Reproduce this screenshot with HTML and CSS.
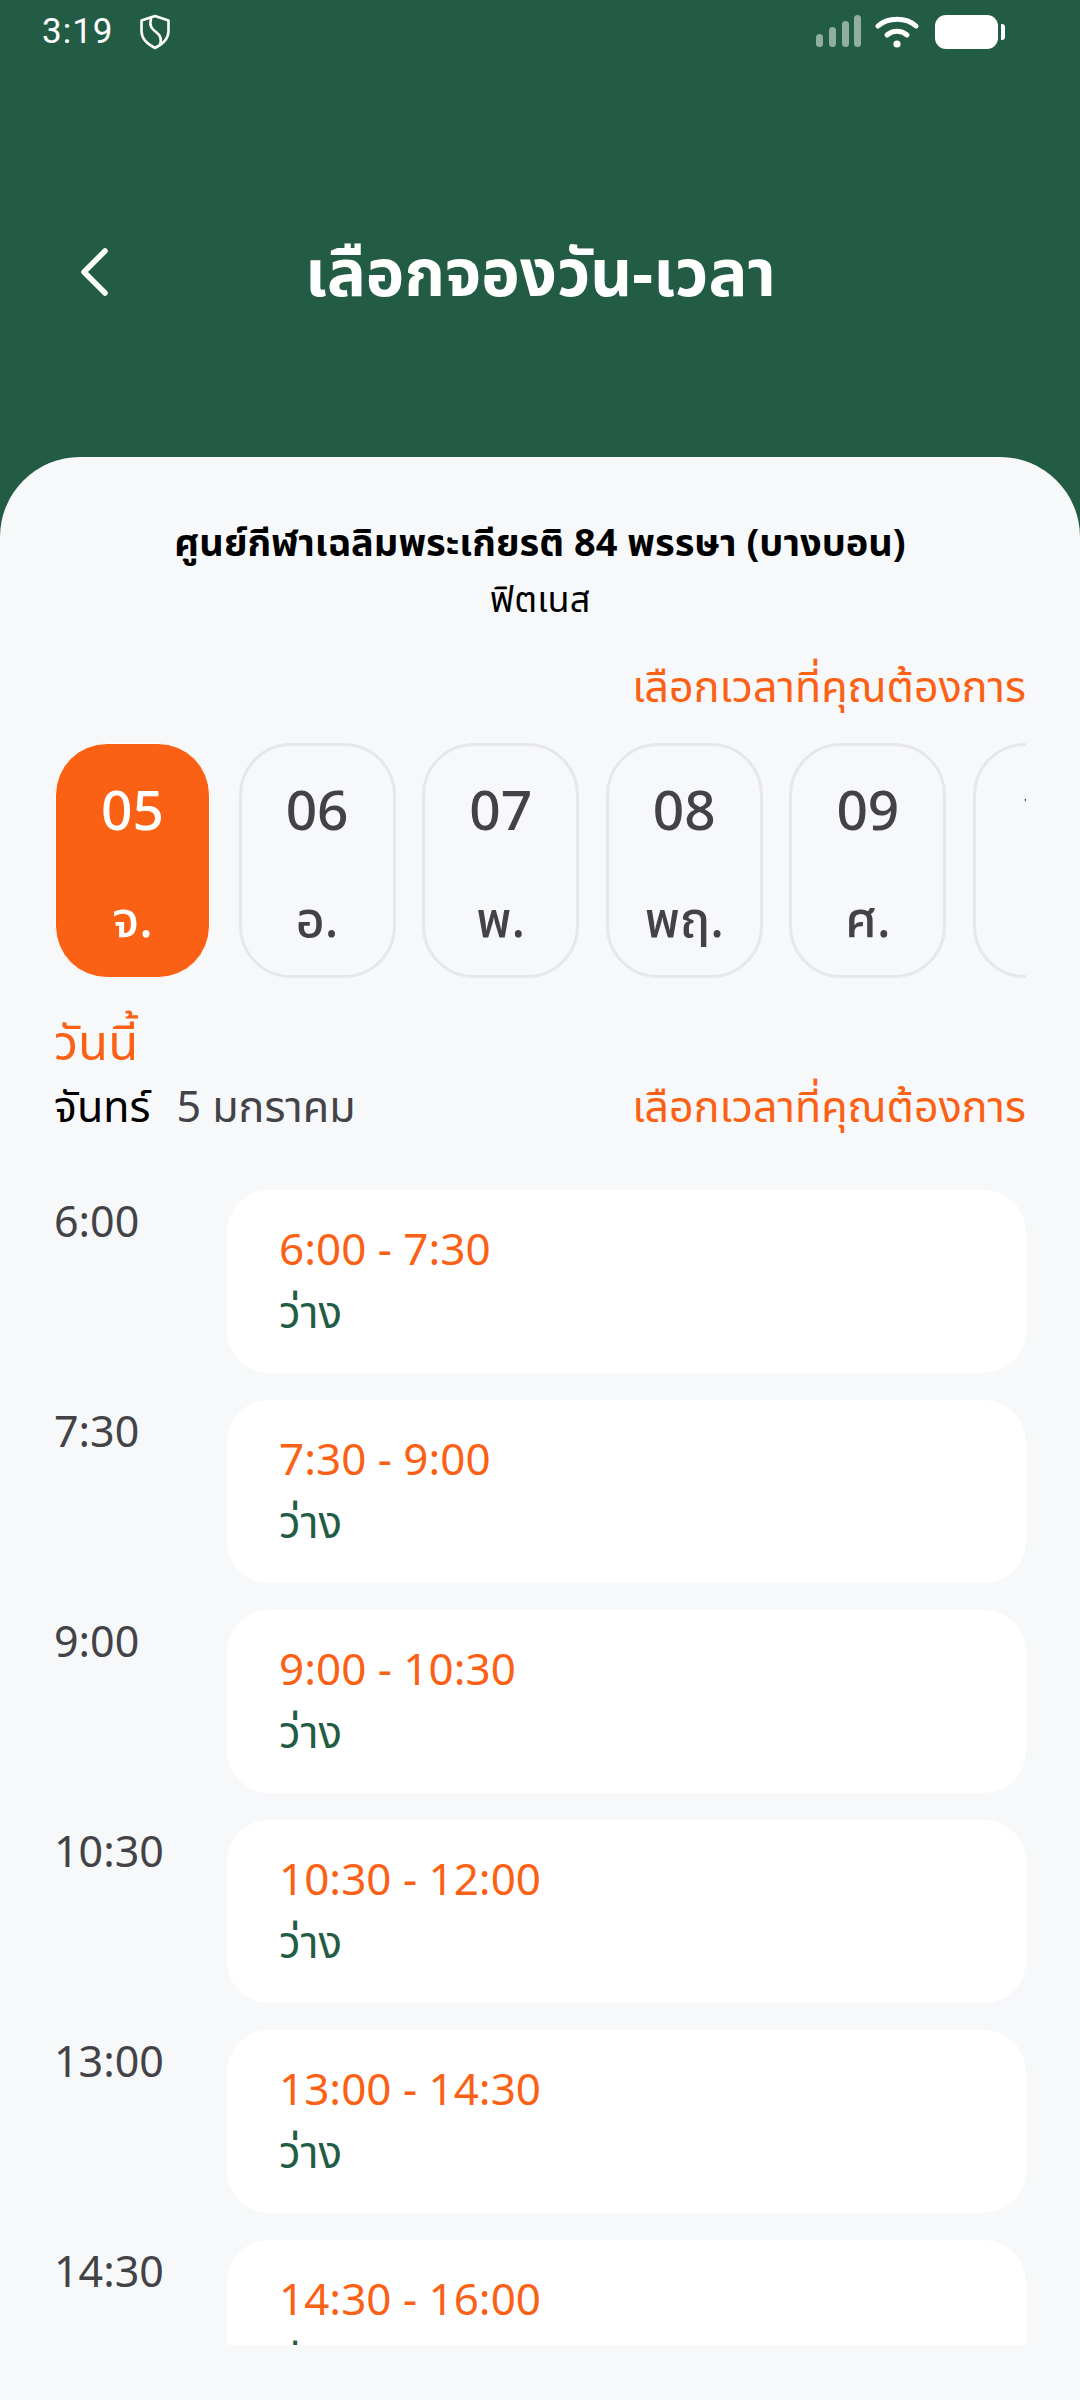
FILE: index.html
```html
<!DOCTYPE html>
<html lang="th">
<head>
  <meta charset="UTF-8">
  <title>เลือกจองวัน-เวลา</title>
  <link rel="stylesheet" href="styles.css">
</head>
<body>
  <header class="header">
    <div class="status-bar">
      <div class="status-left">
        <span class="clock">3:19</span>
        <svg class="shield" width="30" height="36" viewBox="0 0 30 36" fill="none" stroke="#fff" stroke-width="2.6" stroke-linejoin="round" stroke-linecap="round">
          <path d="M15 2 L28.5 6.5 V17 C28.5 25 22 30.5 15 34 C8 30.5 1.5 25 1.5 17 V6.5 Z"/>
          <path d="M11 5 C9 12 12 15 16 18 C20 21 22 24 20 31"/>
        </svg>
      </div>
      <div class="status-right">
        <svg width="46" height="34" viewBox="0 0 46 34" fill="#fff" fill-opacity="0.5">
          <rect x="1" y="19" width="7" height="13" rx="3.5"/>
          <rect x="14" y="12" width="7" height="20" rx="3.5"/>
          <rect x="27" y="6" width="7" height="26" rx="3.5"/>
          <rect x="39" y="0" width="7" height="32" rx="3.5"/>
        </svg>
        <svg class="wifi" width="44" height="34" viewBox="0 0 44 34" fill="none" stroke="#fff" stroke-width="5" stroke-linecap="round">
          <path d="M3 11 C13 2 31 2 41 11"/>
          <path d="M12 20 C18 15 26 15 32 20"/>
          <circle cx="22" cy="29" r="3.6" fill="#fff" stroke="none"/>
        </svg>
        <div class="battery"><span class="battery-body"></span><span class="battery-tip"></span></div>
      </div>
    </div>
    <div class="title-row">
      <svg class="back" width="32" height="48" viewBox="0 0 32 48" fill="none" stroke="#fff" stroke-width="5.5" stroke-linecap="round" stroke-linejoin="round">
        <path d="M27 3 L6 24 L27 45"/>
      </svg>
      <h1>เลือกจองวัน-เวลา</h1>
    </div>
  </header>

  <main class="sheet">
    <h2 class="venue">ศูนย์กีฬาเฉลิมพระเกียรติ 84 พรรษา (บางบอน)</h2>
    <p class="sport">ฟิตเนส</p>
    <p class="hint hint-top">เลือกเวลาที่คุณต้องการ</p>

    <div class="dates">
      <div class="date active"><span class="num">05</span><span class="dow">จ.</span></div>
      <div class="date"><span class="num">06</span><span class="dow">อ.</span></div>
      <div class="date"><span class="num">07</span><span class="dow">พ.</span></div>
      <div class="date"><span class="num">08</span><span class="dow">พฤ.</span></div>
      <div class="date"><span class="num">09</span><span class="dow">ศ.</span></div>
      <div class="date"><span class="num">10</span><span class="dow">ส.</span></div>
    </div>

    <p class="today">วันนี้</p>
    <div class="day-row">
      <p class="day-name">จันทร์<span class="day-date">5 มกราคม</span></p>
      <p class="hint">เลือกเวลาที่คุณต้องการ</p>
    </div>

    <div class="slots">
      <div class="slot"><span class="slot-time">6:00</span><div class="card"><span class="range">6:00 - 7:30</span><span class="free">ว่าง</span></div></div>
      <div class="slot"><span class="slot-time">7:30</span><div class="card"><span class="range">7:30 - 9:00</span><span class="free">ว่าง</span></div></div>
      <div class="slot"><span class="slot-time">9:00</span><div class="card"><span class="range">9:00 - 10:30</span><span class="free">ว่าง</span></div></div>
      <div class="slot"><span class="slot-time">10:30</span><div class="card"><span class="range">10:30 - 12:00</span><span class="free">ว่าง</span></div></div>
      <div class="slot"><span class="slot-time">13:00</span><div class="card"><span class="range">13:00 - 14:30</span><span class="free">ว่าง</span></div></div>
      <div class="slot"><span class="slot-time">14:30</span><div class="card"><span class="range">14:30 - 16:00</span><span class="free">ว่าง</span></div></div>
    </div>
  </main>
</body>
</html>
```

FILE: styles.css
```css
* {
  box-sizing: border-box;
}

html, body {
  margin: 0;
  padding: 0;
}

body {
  width: 1080px;
  height: 2400px;
  overflow: hidden;
  background: #f7f8fa;
  font-family: "Noto Sans", "Noto Sans Thai", "IBM Plex Sans Thai", Roboto, sans-serif;
  color: #000;
}

p, h1, h2 {
  margin: 0;
  font-weight: 400;
}

.header {
  height: 540px;
  background: #235c45;
  color: #fff;
}

.status-bar {
  height: 60px;
  padding: 3px 75px 0 42px;
  display: flex;
  align-items: center;
  justify-content: space-between;
}

.status-left, .status-right {
  display: flex;
  align-items: center;
}

.clock {
  font-family: Roboto, sans-serif;
  font-size: 35px;
  letter-spacing: 1px;
}

.shield {
  margin-left: 26px;
}

.wifi {
  margin-left: 14px;
}

.battery {
  margin-left: 16px;
  display: flex;
  align-items: center;
  gap: 3px;
}

.battery-body {
  width: 63px;
  height: 34px;
  border-radius: 11px;
  background: #fff;
}

.battery-tip {
  width: 4px;
  height: 16px;
  border-radius: 0 3px 3px 0;
  background: #fff;
}

.title-row {
  height: 80px;
  margin-top: 171px;
  padding-left: 78px;
  display: flex;
  align-items: center;
}

.back {
  margin-top: 2px;
}

h1 {
  margin-left: 195px;
  font-size: 65px;
  font-weight: 700;
  line-height: 80px;
}

.sheet {
  margin-top: -83px;
  height: 1943px;
  padding: 0 54px;
  background: #f7f8fa;
  border-radius: 80px 80px 0 0;
  position: relative;
  display: flex;
  flex-direction: column;
}

.venue {
  margin-top: 59px;
  font-size: 38px;
  font-weight: 700;
  line-height: 50px;
  text-align: center;
}

.sport {
  margin-top: 8px;
  font-size: 36px;
  line-height: 50px;
  text-align: center;
}

.hint {
  font-size: 43px;
  line-height: 56px;
  color: #fb6115;
}

.hint-top {
  margin-top: 34px;
  text-align: right;
}

.dates {
  margin-top: 29px;
  padding-left: 1px;
  display: flex;
  gap: 26.6px;
  overflow: hidden;
}

.date {
  flex: 0 0 157px;
  height: 235px;
  border: 3px solid #e6e7e9;
  border-radius: 52px;
  color: #434347;
  display: flex;
  flex-direction: column;
  align-items: center;
}

.date.active {
  flex-basis: 155px;
  margin-right: 2px;
  background: #fb6115;
  border: 1px solid #fff;
  color: #fff;
}

.num {
  margin-top: 33px;
  font-size: 55px;
  font-weight: 500;
  line-height: 60px;
}

.active .num {
  margin-top: 35px;
}

.dow {
  margin-top: 49px;
  font-size: 50px;
  font-weight: 500;
  line-height: 60px;
}

.today {
  margin-top: 31px;
  font-size: 49px;
  line-height: 64px;
  color: #fb6115;
}

.day-row {
  margin-top: 5px;
  display: flex;
  align-items: center;
  justify-content: space-between;
}

.day-name {
  font-size: 43px;
  line-height: 56px;
}

.day-date {
  margin-left: 26px;
  color: #434347;
}

.slots {
  margin-top: 56px;
  height: 1155px;
  overflow: hidden;
  display: flex;
  flex-direction: column;
  gap: 27px;
}

.slot {
  flex: 0 0 183px;
  display: flex;
}

.slot-time {
  width: 173px;
  padding-top: 3px;
  font-size: 43px;
  line-height: 56px;
  color: #434347;
}

.card {
  flex: 1;
  padding: 32px 52px 0;
  background: #fff;
  border-radius: 42px;
  display: flex;
  flex-direction: column;
}

.range {
  font-size: 44px;
  line-height: 52px;
  color: #fb6115;
}

.free {
  margin-top: 11px;
  font-size: 44px;
  line-height: 52px;
  color: #235c45;
}
```
